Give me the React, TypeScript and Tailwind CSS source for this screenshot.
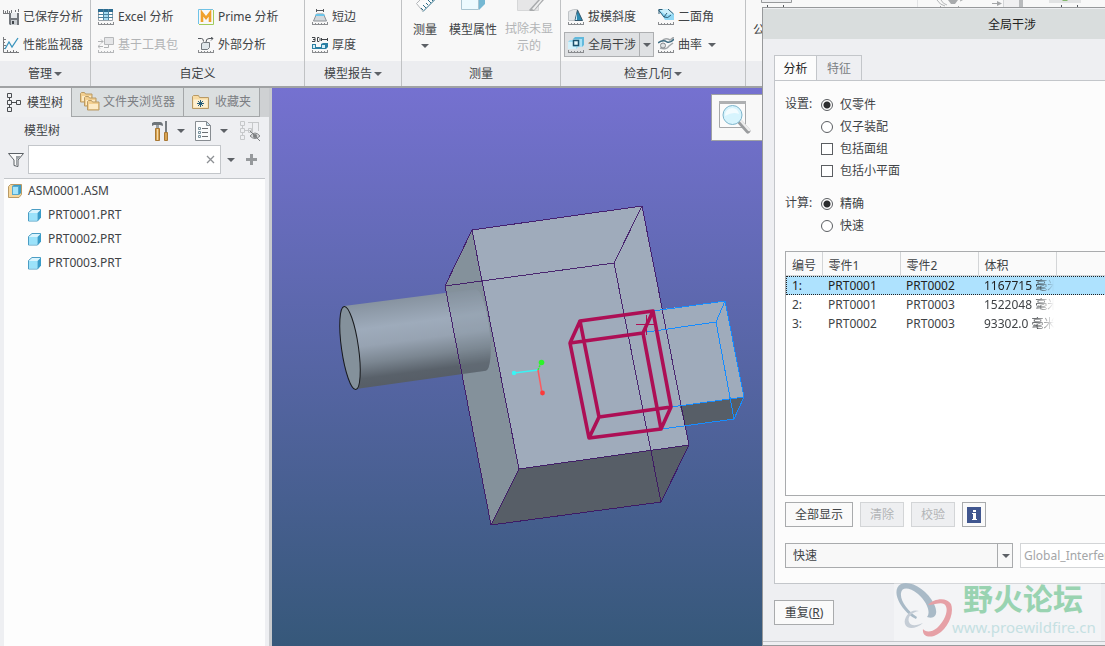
import React, { useState } from 'react';

type IconProps = { className?: string };

const Svg: React.FC<{ w?: number; h?: number; className?: string; children: React.ReactNode }> = ({
  w = 16,
  h = 16,
  className = '',
  children,
}) => (
  <svg width={w} height={h} viewBox={`0 0 ${w} ${h}`} fill="none" className={`shrink-0 ${className}`} aria-hidden="true">
    {children}
  </svg>
);

const Caret: React.FC<IconProps> = ({ className = '' }) => (
  <Svg w={8} h={4} className={className}>
    <path d="M0 0h8L4 4z" fill="#5d6166" />
  </Svg>
);

// ruler ticks shared by the analysis icons
const Ruler = ({ color = '#8a8c8f' }: { color?: string }) => (
  <path d="M0 15.5h16M0.5 13v2M3.5 14v1M6.5 14v1M9.5 14v1M12.5 14v1M15.5 13v2" stroke={color} />
);

const SavedIcon = () => (
  <Svg>
    <path d="M0.500 1v4M0 4.500h6M2.500 2v3M4.500 1v4M6.500 2v3M8.500 1v3M12.500 1v2M15.500 0v3" stroke="#77797c" />
    <path d="M6 4h10v12H7l-1-1z" fill="#74787d" />
    <path d="M8 4h6v5H8z" fill="#e8eaec" />
    <path d="M8 11h6v5H8z" fill="#c9cdd1" />
    <path d="M9 12h2v3H9z" fill="#404449" />
  </Svg>
);

const MonitorIcon = () => (
  <Svg>
    <path d="M0.500 0v15.500h15.500M1 2.500h2M1 5.500h1M1 8.500h2M1 11.500h1M4.500 13v2M7.500 14v1M10.500 13v2M13.500 14v1" stroke="#77797c" />
    <path d="M2 12l4-7 3 5 6-9" stroke="#3a94bd" strokeWidth="1.300" />
  </Svg>
);

const ExcelIcon = () => (
  <Svg>
    <path d="M0.500 0.500h14v11h-14z" fill="#fff" stroke="#9aa3aa" />
    <path d="M0 0h15v3H0z" fill="#2b6c91" />
    <path d="M5 3h5v8H5z" fill="#a5dcf3" />
    <path d="M0 5.500h15M0 8.500h15M5.500 0v11M10.500 0v11" stroke="#4c829e" />
    <Ruler />
  </Svg>
);

const PrimeIcon = () => (
  <Svg>
    <path d="M0.500 15V0.500H15" stroke="#6fc3e8" />
    <path d="M15.500 1v14.500H1" stroke="#a1cb5b" />
    <path d="M4 13V4l4 5 4-5v9" stroke="#f0a02b" strokeWidth="2.600" />
  </Svg>
);

const ToolkitIcon = () => (
  <Svg>
    <path d="M6.500 0.500h9v7h-9z" fill="#e5e6e8" stroke="#b6b8ba" />
    <path d="M0 4.500h5M3 2.500l2 2-2 2M0 9.500h5M2 7.500l-2 2 2 2M10.500 8v2.500H6" stroke="#b0b2b4" />
    <Ruler color="#b6b8ba" />
  </Svg>
);

const ExternalIcon = () => (
  <Svg>
    <path d="M3.500 6.500l2-1h6v5l-2 2h-6z" fill="#dfe6ea" stroke="#73797e" />
    <path d="M0 1.500h3.500q2 0 2 3M8 5q0-3.500 3-3.500h4M13 0l2 1.500-2 2" stroke="#55595e" />
    <Ruler />
  </Svg>
);

const ShortEdgeIcon = () => (
  <Svg>
    <path d="M4 1.500h8M4.500 0v3M11.500 0v3" stroke="#55595e" />
    <path d="M4.500 5h7l3 7h-13z" fill="#d3d8dc" stroke="#8b9095" />
    <path d="M4 5h8l1 2H3z" fill="#6bc5ea" />
    <Ruler />
  </Svg>
);

const ThicknessIcon = () => (
  <Svg>
    <path d="M0 0.500h3v4H0M1 2.500h2M5.500 0.500h1.500l1 1v2l-1 1H5.500zM9 2.500h6M9.500 1v3M15.500 1v3" stroke="#404449" />
    <path d="M0 7h4v3h5V7l2-1h5v4l-2 2H0z" fill="#2b7fa3" />
    <path d="M1 8h2v3h7V8h3v3H1z" fill="#d4eef8" />
    <Ruler />
  </Svg>
);

const DraftIcon = () => (
  <Svg>
    <path d="M0.500 2.500l5-2h4v11h-9z" fill="#e2e5e7" stroke="#c0c4c7" />
    <path d="M9.500 1l5 10.500H7z" fill="#2c8ab0" stroke="#35566a" />
    <path d="M9 4v7H7.500z" fill="#cdeefa" />
    <Ruler />
  </Svg>
);

const DihedralIcon = () => (
  <Svg>
    <path d="M1 1l9-1 6 5v6H7z" fill="#8fd8f5" />
    <path d="M1 1l9-1 6 5-8 1z" fill="#c9effb" />
    <path d="M0.500 1l5.500 7 3-4M6 8q4 2 7-2M0.500 0.500h4M1 1l0 4M10 0l5.500 5" stroke="#2c5d77" />
    <Ruler />
  </Svg>
);

const InterferenceIcon = () => (
  <Svg>
    <path d="M0 5l2-2h8v7l-2 2H0z" fill="#9bdcf4" />
    <path d="M0 5h8v7H0z" fill="#d3f1fb" />
    <path d="M5 2l2-2h9v8l-2 2H5z" fill="#62b9dc" />
    <path d="M5 2h9v8H5z" fill="#a9e2f6" />
    <path d="M5.500 3.500h5v5h-5z" fill="#e6f8fd" stroke="#1c516c" strokeWidth="1.500" />
    <Ruler />
  </Svg>
);

const CurvatureIcon = () => (
  <Svg>
    <path d="M4 4q3-4 8-1l4-3M2 11q7 2 9-2l4-3" stroke="#a3a7aa" strokeWidth="1.500" />
    <path d="M0 6q5-4 9-1 4 1 7-3" stroke="#3e6b80" strokeWidth="1.500" />
    <circle cx="5" cy="8.500" r="2.500" fill="#e0e3e5" stroke="#85898d" />
    <Ruler />
  </Svg>
);

const TreeIcon = () => (
  <Svg w={14} h={19}>
    <path d="M0.500 0.500h4v4h-4zM0.500 7.500h4v4h-4zM0.500 14.500h4v4h-4zM9.500 7.500h4v4h-4zM2.500 5v2M2.500 12v2M5 9.500h4" stroke="#4a4d50" />
  </Svg>
);

const FoldersIcon = () => (
  <Svg w={20} h={20}>
    {[0, 4, 8].map((o) => (
      <g key={o} transform={`translate(${o === 8 ? 7 : o} ${o})`}>
        <path d="M0.500 1.500l1-1h3l1 1.500h6.500v8H0.500z" fill="#f3cf8f" stroke="#b99a65" />
        <path d="M2 4h9v5H2z" fill="#fdebc6" />
      </g>
    ))}
  </Svg>
);

const FavoritesIcon = () => (
  <Svg w={18} h={15}>
    <path d="M0.500 1.500l1-1h5l1 2h9v11H0.500z" fill="#f8dba2" stroke="#b99a65" />
    <path d="M1.500 4.500h14v8h-14z" fill="#fdf0d2" />
    <path d="M8.500 5v7M5 8.500h7M6 6l5 5M11 6l-5 5" stroke="#255d7a" />
  </Svg>
);

const ToolsIcon = () => (
  <Svg w={17} h={21}>
    <path d="M0 5V2l2-1h6q3 0 3 4L8 4H2z" fill="#6d7479" />
    <path d="M4 4h3v3H4z" fill="#9ca2a6" />
    <path d="M3.500 7.500h4v12h-4z" fill="#d8a352" stroke="#a87834" />
    <path d="M5 8h1v11H5z" fill="#f3d9a8" />
    <path d="M13 0h2v11h-2z" fill="#777d82" />
    <path d="M12.500 11.500h3v8h-3z" fill="#d8a352" stroke="#a87834" />
  </Svg>
);

const SettingsListIcon = () => (
  <Svg w={17} h={20}>
    <path d="M0.500 0.500h11l4 4v15H0.500z" fill="#fafbfc" stroke="#878c91" />
    <path d="M11.500 0.500v4h4z" fill="#c9e3ee" stroke="#878c91" />
    <path d="M3.500 6.500h2v2h-2zM3.500 10.500h2v2h-2zM3.500 14.500h2v2h-2z" stroke="#77909c" />
    <path d="M7 7.500h6M7 11.500h6M7 15.500h6" stroke="#6b6f73" />
  </Svg>
);

const HiddenTreeIcon = () => (
  <Svg w={21} h={20}>
    <path d="M0.500 0.500h4v4h-4zM0.500 7.500h4v4h-4zM0.500 14.500h4v4h-4zM2.500 5v2M2.500 12v2M5 9.500h7M8.500 7.500h3v4h-3zM8 1.500h11M12.500 2v14M18.500 2v8" stroke="#c6c8ca" />
    <path d="M10 15q5-6 10 0-5 5-10 0z" fill="#d5d6d8" stroke="#85888b" />
    <circle cx="15" cy="15" r="2" fill="#7b7e81" />
    <path d="M10 10l10 10" stroke="#7b7e81" />
  </Svg>
);

const FunnelIcon = () => (
  <Svg>
    <path d="M0.500 1.500h15L10 8v6.500l-4-1V8z" fill="#fafafa" stroke="#5b6065" />
    <path d="M8 4h5L9 8v5H8z" fill="#9da2a6" />
  </Svg>
);

const PartIcon = () => (
  <Svg w={14} h={14}>
    <path d="M0.500 4.500L4 1.500h8.500v8l-3 3.500h-9z" fill="#d9f4fd" stroke="#4b9dc4" />
    <path d="M1 5h8.500v7.500H1z" fill="#9be2fa" />
    <path d="M9.500 5L13 1.500v8L9.500 13z" fill="#3a9dc9" />
  </Svg>
);

const AssemblyIcon = () => (
  <Svg w={14} h={14}>
    <path d="M0.500 2.500l2-2h11v10l-2.500 3H0.500z" fill="#f7d79b" stroke="#b99a65" />
    <path d="M4 2l2-1h7v8l-2 2H4z" fill="#3a9dc9" />
    <path d="M4.500 2.500h6v8h-6z" fill="#a6e5fb" stroke="#5aa9cd" />
  </Svg>
);

const RibbonGroup: React.FC<{ label: string; menu?: boolean; className: string; children: React.ReactNode }> = ({
  label,
  menu,
  className,
  children,
}) => (
  <section className={`flex shrink-0 flex-col border-r border-[#c0c2c4] ${className}`}>
    <div className="flex h-[61px] pt-[3px]">{children}</div>
    <div className="flex h-[25px] items-center justify-center gap-0.5 bg-[#ecedf0]">
      {label}
      {menu && <Caret />}
    </div>
  </section>
);

const RibbonButton: React.FC<{ icon: React.ReactNode; label: string; disabled?: boolean; menu?: boolean }> = ({
  icon,
  label,
  disabled,
  menu,
}) => (
  <button type="button" disabled={disabled} className="flex h-7 items-center gap-1 whitespace-nowrap disabled:text-[#b2b4b6]">
    {icon}
    <span>{label}</span>
    {menu && <Caret className="ml-0.5" />}
  </button>
);

const Ribbon = () => (
  <header className="flex h-[88px] shrink-0 overflow-hidden border-b-2 border-[#a0a2a4] bg-[#f8f8f8]">
    <RibbonGroup label="管理" menu className="w-[91px]">
      <div className="pl-[3px]">
        <RibbonButton icon={<SavedIcon />} label="已保存分析" />
        <RibbonButton icon={<MonitorIcon />} label="性能监视器" />
      </div>
    </RibbonGroup>
    <RibbonGroup label="自定义" className="w-[214px]">
      <div className="w-[107px] pl-[7px]">
        <RibbonButton icon={<ExcelIcon />} label="Excel 分析" />
        <RibbonButton icon={<ToolkitIcon />} label="基于工具包" disabled />
      </div>
      <div>
        <RibbonButton icon={<PrimeIcon />} label="Prime 分析" />
        <RibbonButton icon={<ExternalIcon />} label="外部分析" />
      </div>
    </RibbonGroup>
    <RibbonGroup label="模型报告" menu className="w-[97px]">
      <div className="pl-[7px]">
        <RibbonButton icon={<ShortEdgeIcon />} label="短边" />
        <RibbonButton icon={<ThicknessIcon />} label="厚度" />
      </div>
    </RibbonGroup>
    <RibbonGroup label="测量" className="w-[159px]">
      <div className="-mt-[3px] flex">
        <button type="button" className="flex w-[46px] flex-col items-center">
          <Svg w={24} h={16}>
            <path d="M16-1L3.500 3.500 10 11.500 24-2z" fill="#fafbfb" />
            <path d="M8-1L3.500 3.500 10 11.500" stroke="#b3b6b9" />
            <path d="M10 11.500L23-1.500M8 8l2 2M10 5l3 3M13 3l2 2M15 0l3 3M18-1l2 2" stroke="#2d6c87" />
          </Svg>
          <span className="mt-1 leading-[20px]">测量</span>
          <Caret className="mt-1" />
        </button>
        <button type="button" className="flex w-[50px] flex-col items-center">
          <Svg w={26} h={16}>
            <path d="M1.500-1h17v10.500h-17z" fill="#ecfafe" stroke="#a9c5d1" />
            <path d="M19-1h6v5l-6 6z" fill="#75b8d3" />
          </Svg>
          <span className="mt-1 whitespace-nowrap leading-[20px]">模型属性</span>
        </button>
        <button type="button" disabled className="flex w-[62px] flex-col items-center text-[#b2b4b6]">
          <Svg w={30} h={16}>
            <path d="M3.500-1h21v11.500h-21z" fill="#e6e6e7" stroke="#d6d7d8" />
            <path d="M15 10l10-11h6l-11 12h-4z" fill="#a9abad" />
            <path d="M18 9l9-10h2l-9 11z" fill="#eee" />
          </Svg>
          <span className="mt-1 w-12 leading-[17px]">拭除未显示的</span>
        </button>
      </div>
    </RibbonGroup>
    <RibbonGroup label="检查几何" menu className="w-[185px]">
      <div className="w-[97px] pl-[3px]">
        <div className="pl-1">
          <RibbonButton icon={<DraftIcon />} label="拔模斜度" />
        </div>
        <div className="mt-px flex h-[25px] w-[90px] border border-[#adafb1] bg-[#dfe1e3]">
          <button type="button" className="flex flex-1 items-center gap-1 whitespace-nowrap pl-[3px]">
            <InterferenceIcon />
            全局干涉
          </button>
          <button type="button" aria-label="全局干涉选项" className="flex w-3.5 items-center justify-center border-l border-[#adafb1]">
            <Caret />
          </button>
        </div>
      </div>
      <div>
        <RibbonButton icon={<DihedralIcon />} label="二面角" />
        <RibbonButton icon={<CurvatureIcon />} label="曲率" menu />
      </div>
    </RibbonGroup>
    <section className="flex w-[172px] shrink-0 flex-col border-r border-[#e2e3e5]">
      <div className="h-[61px] pl-[7px]">
        <Svg w={40} h={16}>
          <path d="M8.500-1v3.500h30V-1" fill="#eeeff1" stroke="#97999b" />
          <path d="M14.500 5v2M30.500 5v2" stroke="#55595e" />
        </Svg>
        <span className="mt-1 block leading-[20px]">公差</span>
      </div>
      <div className="h-[25px] bg-[#ecedf0]" />
    </section>
    <Svg w={86} h={12}>
      <path d="M19 0q3 5 8 6M23 0q2 4 6 5" stroke="#b4b6b8" />
      <path d="M30 0h10l-3 4h-4z" fill="#a9abad" />
      <path d="M42 1l4-2M22.500 6v2M40.500 6v2" stroke="#a4a6a8" />
      <path d="M74 3.500h8" stroke="#a4a6a8" />
      <path d="M79 1l5 2.500-5 2.500z" fill="#a4a6a8" />
      <path d="M85.500 0v8" stroke="#d3d5d7" />
    </Svg>
    <div className="w-[19px] shrink-0 border-r-4 border-[#b9bbbd] bg-[#f0f0f1]" />
    <Svg w={84} h={12}>
      <path d="M26 0h32v3H26z" fill="#e2e3e4" />
      <path d="M39 0h6l-1 1h-4z" fill="#84b66d" />
      <path d="M38.500 5v2M54.500 5v2" stroke="#55595e" />
    </Svg>
  </header>
);

const PARTS = ['PRT0001.PRT', 'PRT0002.PRT', 'PRT0003.PRT'];

const ModelTree = () => (
  <aside className="flex w-[272px] shrink-0 flex-col border-r-[3px] border-[#c8cacd] bg-[#eeeff2]">
    <div className="flex h-[29px] bg-[#cfd1d3] text-[#7b7e83]" role="tablist">
      <button type="button" role="tab" aria-selected="true" className="flex w-[71px] items-center gap-1.5 bg-[#f0f1f3] pl-[7px] text-[#404346]">
        <TreeIcon />
        模型树
      </button>
      <button type="button" role="tab" aria-selected="false" className="flex w-[113px] items-center gap-[3px] whitespace-nowrap border border-t-0 border-[#a4a7a9] bg-[#dbdfe0] pl-2">
        <FoldersIcon />
        文件夹浏览器
      </button>
      <button type="button" role="tab" aria-selected="false" className="flex w-[76px] items-center gap-[5px] border-r border-b border-[#a4a7a9] bg-[#dbdfe0] pl-2">
        <FavoritesIcon />
        收藏夹
      </button>
    </div>
    <div className="flex h-7 items-center pl-6">
      <h2 className="w-32">模型树</h2>
      <button type="button" aria-label="工具"><ToolsIcon /></button>
      <Caret className="ml-2" />
      <button type="button" aria-label="设置" className="ml-2.5"><SettingsListIcon /></button>
      <Caret className="ml-2" />
      <button type="button" aria-label="隐藏项" className="ml-3"><HiddenTreeIcon /></button>
    </div>
    <div className="flex h-[29px] items-center pl-2">
      <FunnelIcon />
      <div className="ml-1 flex h-[29px] w-[193px] items-center border border-[#c3c6ca] bg-white">
        <input type="text" aria-label="过滤" className="h-full min-w-0 flex-1 px-1 outline-none" />
        <button type="button" aria-label="清除过滤" className="mr-[3px] p-0.5">
          <Svg w={9} h={9}><path d="M1 1l7 7M8 1L1 8" stroke="#8d9094" strokeWidth="1.300" /></Svg>
        </button>
      </div>
      <Caret className="ml-1.5" />
      <button type="button" aria-label="添加" className="ml-[11px]">
        <Svg w={11} h={11}><path d="M5.500 0v11M0 5.500h11" stroke="#96999c" strokeWidth="3" /></Svg>
      </button>
    </div>
    <ul className="mx-1 mt-1 flex-1 border-t border-[#c3c6ca] bg-[#fdfdfd]">
      <li className="flex h-6 items-center gap-1.5 pl-1"><AssemblyIcon />ASM0001.ASM</li>
      {PARTS.map((name) => (
        <li key={name} className="flex h-6 items-center gap-1.5 pl-6"><PartIcon />{name}</li>
      ))}
    </ul>
  </aside>
);

const Viewport = () => (
  <main className="relative min-w-0 flex-1 overflow-hidden bg-linear-to-b from-[#7571d0] to-[#36587a]">
    <svg width="833" height="558" viewBox="272 88 833 558" fill="none" className="max-w-none" role="img" aria-label="装配模型">
      <defs>
        <linearGradient id="cyl" gradientUnits="userSpaceOnUse" x1="405" y1="298" x2="416" y2="382">
          <stop offset="0" stopColor="#8793a0" />
          <stop offset="0.300" stopColor="#9eabbb" />
          <stop offset="0.500" stopColor="#97a3b2" />
          <stop offset="0.700" stopColor="#7b8691" />
          <stop offset="0.880" stopColor="#59616a" />
          <stop offset="1" stopColor="#565d66" />
        </linearGradient>
      </defs>
      <path d="M472 230L642 206L689 445L519 469z" fill="#9fabbb" />
      <path d="M472 230L445 286L491 525L519 469z" fill="#84919b" />
      <path d="M519 469L689 445L661 502L491 525z" fill="#575e67" />
      <path d="M344 306L476 289Q483 292 488 320Q493 350 489 366Q488 371 484 371L356 389z" fill="url(#cyl)" />
      <path d="M445 286L448 293L476 289Q483 292 488 320Q493 350 489 366Q488 371 484 371L461 375z" fill="#84919b" fillOpacity="0.200" />
      <ellipse cx="350" cy="348" rx="8.500" ry="42" transform="rotate(-8 350 348)" fill="#84919b" stroke="#17191c" />
      <g shapeRendering="crispEdges">
        <path d="M472 230L642 206L689 445L519 469zM472 230L445 286L491 525L519 469M491 525L661 502L689 445M445 286L614 263L642 206M614 263L661 502" stroke="#3b0f63" strokeOpacity="0.850" />
        <path d="M662 309L725 301L744 397L680 406z" fill="#9fabbb" />
        <path d="M680 406L744 397L734 419L685 425z" fill="#575e67" />
        <path d="M662 309L685 425" stroke="#3b0f63" strokeOpacity="0.850" />
        <path d="M653 311L725 301L744 397L734 419L662 429M647 332L716 322L725 301M716 322L734 419M671 407L744 397" stroke="#168cff" />
      </g>
      <path d="M580 321L653 311L671 407L599 417zM570 343L643 333L661 429L589 438zM580 321L570 343M653 311L643 333M671 407L661 429M599 417L589 438" stroke="#ad0f55" strokeWidth="3.600" strokeLinejoin="round" />
      <path d="M636 324.500h18M646.500 315v20" stroke="#ad0f55" />
      <path d="M538 370L514 373" stroke="#38f4f5" strokeWidth="1.500" />
      <path d="M538 370L541 363" stroke="#2cf529" strokeWidth="1.500" strokeDasharray="2 1" />
      <path d="M538 370L542 393" stroke="#fb5b60" strokeWidth="1.500" />
      <circle cx="514" cy="373" r="2.200" fill="#38f4f5" />
      <circle cx="541.500" cy="362.500" r="2.800" fill="#2cf529" />
      <circle cx="542.500" cy="393" r="2.400" fill="#fb3b3b" />
    </svg>
    <div className="absolute top-1.5 left-[439px] flex h-[47px] w-[120px] items-center border border-[#a0a2a4] bg-[#f8f8f8] pl-[7px]">
      <button type="button" aria-label="重新调整">
        <Svg w={34} h={34}>
          <path d="M0.500 1.500h26v25h-26z" fill="#fbfbfb" stroke="#a6a8aa" />
          <path d="M0 0h27v3H0z" fill="#aeb0b2" />
          <path d="M21 21l8 9" stroke="#9a9c9e" strokeWidth="5" strokeLinecap="round" />
          <path d="M22 20l8 9" stroke="#ededed" strokeWidth="2.500" strokeLinecap="round" />
          <circle cx="13.500" cy="14" r="9.500" fill="#d7f4fd" stroke="#7db5cc" />
          <path d="M6 15q0-7 7-8 6 0 7 6-6-3-14 2z" fill="#fff" fillOpacity="0.700" />
        </Svg>
      </button>
      <Svg w={30} h={30} className="ml-2"><circle cx="15" cy="13" r="13.500" fill="#d7f4fd" stroke="#7db5cc" /></Svg>
    </div>
  </main>
);

const CONTROL = 'm-0 size-3 shrink-0 appearance-none border border-[#5b5e62] bg-white';
const RADIO = `${CONTROL} rounded-full checked:bg-[radial-gradient(circle,#2c2d2f_3px,#fff_4px)]`;
const CHECK = `${CONTROL} checked:bg-[#5b5e62]`;
const OPTION = 'flex h-[22px] items-center gap-[7px]';

const ROWS = [
  ['1:', 'PRT0001', 'PRT0002', '1167715 毫米'],
  ['2:', 'PRT0001', 'PRT0003', '1522048 毫米'],
  ['3:', 'PRT0002', 'PRT0003', '93302.0 毫米'],
];

const ResultTable = () => {
  const [selected, setSelected] = useState(0);

  return (
    <div className="mt-3.5 h-[245px] border border-[#a9abad] bg-white">
      <table className="w-full table-fixed border-collapse text-left">
        <colgroup>
          <col className="w-9" />
          <col className="w-[78px]" />
          <col className="w-[78px]" />
          <col className="w-[78px]" />
          <col />
        </colgroup>
        <thead>
          <tr className="h-[23px] bg-[#fafafa]">
            {['编号', '零件1', '零件2', '体积'].map((h) => (
              <th key={h} className="border-r border-b border-[#d3d5d7] p-0 pt-1 pl-1.5 font-normal leading-[19px] whitespace-nowrap">{h}</th>
            ))}
            <th className="border-b border-[#d3d5d7]" />
          </tr>
        </thead>
        <tbody>
          {ROWS.map((row, i) => (
            <tr
              key={row[0]}
              onClick={() => setSelected(i)}
              className={`h-[19px] ${i === selected ? 'bg-[#aee2fe] text-[#222] outline-1 -outline-offset-1 outline-dotted outline-[#222]' : ''}`}
            >
              {row.map((cell, c) => (
                <td key={c} className={`p-0 pl-1.5 leading-[19px] whitespace-nowrap ${c === 3 ? '[mask-image:linear-gradient(to_right,#000_58px,transparent_76px)]' : ''}`}>
                  {cell}
                </td>
              ))}
              <td />
            </tr>
          ))}
        </tbody>
      </table>
    </div>
  );
};

const BUTTON = 'h-[25px] border border-[#a9abad] bg-[#fafafa] disabled:border-[#d3d5d7] disabled:bg-[#eeeff1] disabled:text-[#b2b4b6]';

const Watermark = () => (
  <div className="pointer-events-none absolute top-[575px] left-[131px] flex h-[58px] w-[207px] bg-white/30">
    <Svg w={60} h={58}>
      <path fillRule="evenodd" d="M7 1C17-3 33 7 40 21C45 31 41 37 33 34C37 29 33 19 24 11C15 4 8 4 7 10C6 18 14 28 23 34L22 36C9 30-5 8 7 1z" fill="#a9bac7" />
      <path d="M34 22C40 15 53 14 57 21C61 32 52 49 40 53C33 55 28 52 29 46C31 49 37 50 43 45C51 38 56 25 50 21C46 19 41 22 34 22z" fill="#e6a0a6" />
      <path d="M25 28C17 25 9 34 11 41C13 47 22 46 29 40C24 42 17 44 15 39C13 34 18 29 25 28z" fill="#c5cdd6" />
    </Svg>
    <div className="flex-1 whitespace-nowrap">
      <div className="pl-[9px] font-['Noto_Sans_CJK_SC',sans-serif] text-[30px] leading-7 font-bold text-[#99d3b1]">野火论坛</div>
      <div className="-ml-0.5 font-['Noto_Sans',sans-serif] text-[15px] leading-8 text-[#c5e0e2]">www.proewildfire.cn</div>
    </div>
  </div>
);

const InterferenceDialog = () => {
  const [scope, setScope] = useState('part');
  const [precision, setPrecision] = useState('exact');

  return (
    <div role="dialog" aria-label="全局干涉" className="absolute top-[7px] bottom-0 left-[762px] flex w-[500px] flex-col border border-[#97999b] bg-[#eeeff2]">
      <h1 className="mt-px h-[30px] bg-[#d9dddd] text-center leading-8 text-[#222]">全局干涉</h1>
      <div className="mx-[11px] mt-4 flex" role="tablist">
        <button type="button" role="tab" aria-selected="true" className="-mb-px h-[26px] w-[43px] border border-b-0 border-[#c3c6ca] bg-[#fcfcfc] text-[#222]">分析</button>
        <button type="button" role="tab" aria-selected="false" className="h-[25px] w-[45px] border border-b-0 border-l-0 border-[#c3c6ca] pt-px text-[#7b7e83]">特征</button>
      </div>
      <div className="mx-[11px] h-[504px] border border-[#c3c6ca] bg-[#fcfcfc] px-2.5 pt-3">
        <fieldset className="flex">
          <legend className="float-left w-9 leading-[22px]">设置:</legend>
          <div className="flex flex-col pt-px">
            <label className={OPTION}><input type="radio" name="scope" className={RADIO} checked={scope === 'part'} onChange={() => setScope('part')} />仅零件</label>
            <label className={OPTION}><input type="radio" name="scope" className={RADIO} checked={scope === 'sub'} onChange={() => setScope('sub')} />仅子装配</label>
            <label className={OPTION}><input type="checkbox" className={CHECK} />包括面组</label>
            <label className={OPTION}><input type="checkbox" className={CHECK} />包括小平面</label>
          </div>
        </fieldset>
        <fieldset className="mt-2.5 flex">
          <legend className="float-left w-9 leading-[22px]">计算:</legend>
          <div className="flex flex-col pt-px">
            <label className={OPTION}><input type="radio" name="precision" className={RADIO} checked={precision === 'exact'} onChange={() => setPrecision('exact')} />精确</label>
            <label className={OPTION}><input type="radio" name="precision" className={RADIO} checked={precision === 'fast'} onChange={() => setPrecision('fast')} />快速</label>
          </div>
        </fieldset>
        <ResultTable />
        <div className="mt-1.5 flex gap-[7px]">
          <button type="button" className={`${BUTTON} w-[68px]`}>全部显示</button>
          <button type="button" disabled className={`${BUTTON} w-11`}>清除</button>
          <button type="button" disabled className={`${BUTTON} w-11`}>校验</button>
          <button type="button" aria-label="信息" className={`${BUTTON} flex w-6 items-center justify-center`}>
            <Svg w={14} h={16}>
              <path d="M0 0h14v16H0z" fill="#40568f" />
              <path d="M6 3h3v2H6zM5 6h4v6h1v1H5v-1h1V7H5z" fill="#fff" />
            </Svg>
          </button>
        </div>
        <div className="mt-4 flex gap-[7px]">
          <div className="relative">
            <select aria-label="保存类型" className="h-[25px] w-[228px] appearance-none border border-[#a9abad] bg-[#f8f8f8] pl-[7px]">
              <option>快速</option>
              <option>已保存</option>
              <option>特征</option>
            </select>
            <span className="pointer-events-none absolute inset-y-0 right-0 flex w-4 items-center justify-center border-l border-[#a9abad]">
              <Caret />
            </span>
          </div>
          <input type="text" disabled aria-label="名称" defaultValue="Global_Interference_1" className="h-[25px] min-w-0 flex-1 border border-[#d3d5d7] bg-white px-[3px] text-[#a4a6a8]" />
        </div>
      </div>
      <div className="mt-4 px-[11px]">
        <button type="button" className={`${BUTTON} w-[60px]`}>
          重复(<u>R</u>)
        </button>
      </div>
      <div className="mt-4 border-t border-[#c3c6ca]" />
      <Watermark />
    </div>
  );
};

const App: React.FC = () => (
  <div className="relative flex h-screen flex-col overflow-hidden bg-[#eeeff2] font-['Noto_Sans','Noto_Sans_CJK_SC',sans-serif] text-xs text-[#404346]">
    <Ribbon />
    <div className="flex min-h-0 flex-1">
      <ModelTree />
      <Viewport />
    </div>
    <InterferenceDialog />
  </div>
);

export default App;
